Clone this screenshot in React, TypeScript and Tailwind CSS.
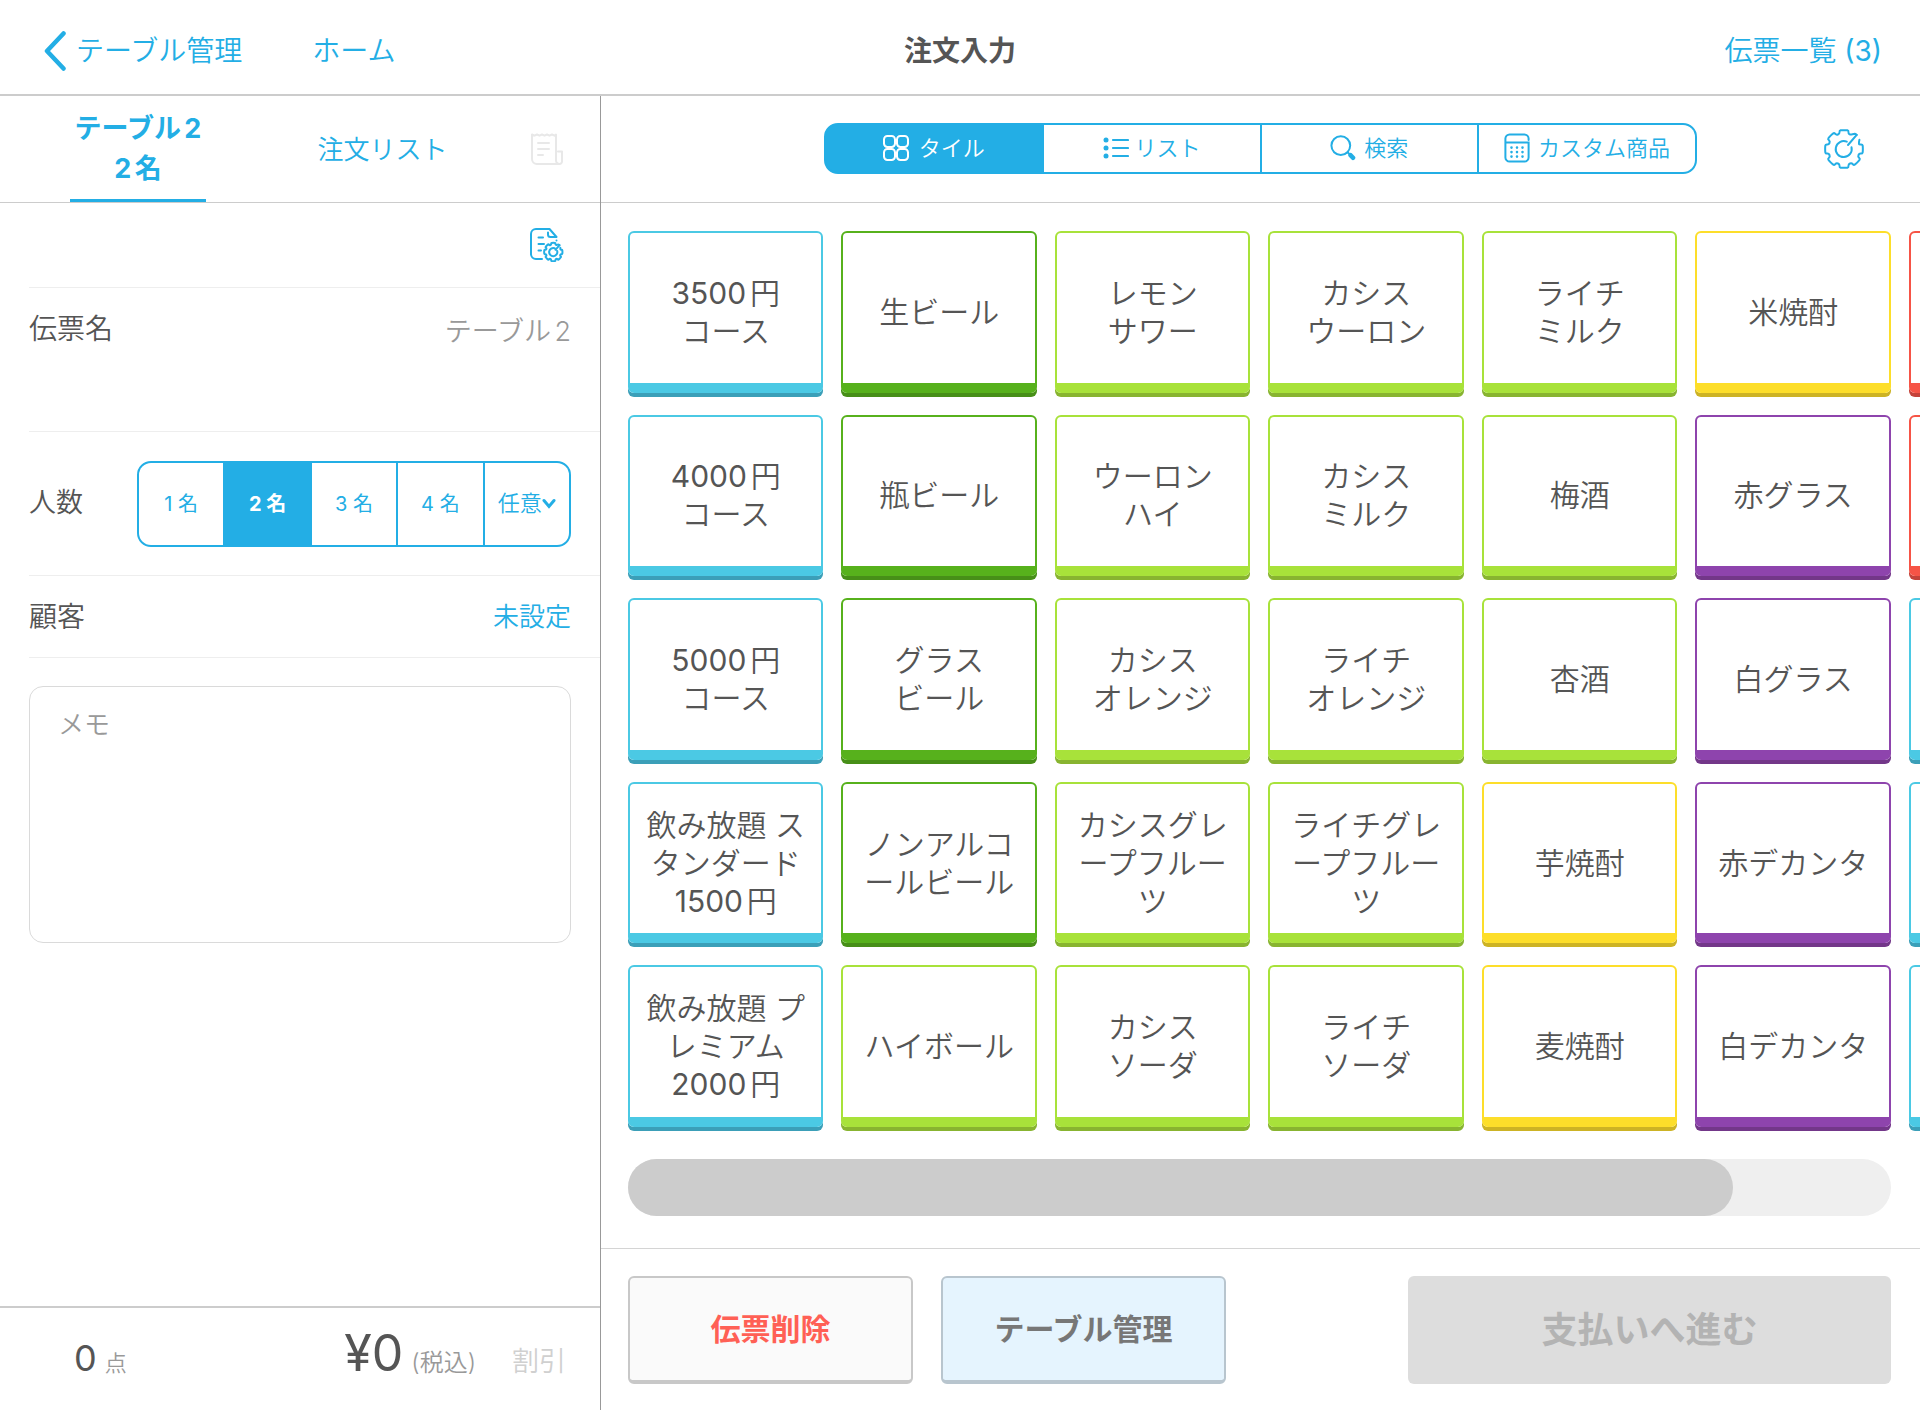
import React, { useState } from "react";

type Tone = "cyan" | "green" | "lime" | "yellow" | "purple" | "red";

const toneClasses: Record<Tone, string> = {
  cyan: "border-[#4bc9e4] shadow-[0_4px_0_#3b9fb8]",
  green: "border-[#57b11c] shadow-[0_4px_0_#478f18]",
  lime: "border-[#a8e23a] shadow-[0_4px_0_#88b430]",
  yellow: "border-[#fdde2a] shadow-[0_4px_0_#cdb324]",
  purple: "border-[#8e44ad] shadow-[0_4px_0_#733789]",
  red: "border-[#f65446] shadow-[0_4px_0_#c4433a]",
};

// one inner list per column, top to bottom
const columns: { name: string; tone: Tone }[][] = [
  [
    { name: "3500円\nコース", tone: "cyan" },
    { name: "4000円\nコース", tone: "cyan" },
    { name: "5000円\nコース", tone: "cyan" },
    { name: "飲み放題 ス\nタンダード\n1500円", tone: "cyan" },
    { name: "飲み放題 プ\nレミアム\n2000円", tone: "cyan" },
  ],
  [
    { name: "生ビール", tone: "green" },
    { name: "瓶ビール", tone: "green" },
    { name: "グラス\nビール", tone: "green" },
    { name: "ノンアルコ\nールビール", tone: "green" },
    { name: "ハイボール", tone: "lime" },
  ],
  [
    { name: "レモン\nサワー", tone: "lime" },
    { name: "ウーロン\nハイ", tone: "lime" },
    { name: "カシス\nオレンジ", tone: "lime" },
    { name: "カシスグレ\nープフルー\nツ", tone: "lime" },
    { name: "カシス\nソーダ", tone: "lime" },
  ],
  [
    { name: "カシス\nウーロン", tone: "lime" },
    { name: "カシス\nミルク", tone: "lime" },
    { name: "ライチ\nオレンジ", tone: "lime" },
    { name: "ライチグレ\nープフルー\nツ", tone: "lime" },
    { name: "ライチ\nソーダ", tone: "lime" },
  ],
  [
    { name: "ライチ\nミルク", tone: "lime" },
    { name: "梅酒", tone: "lime" },
    { name: "杏酒", tone: "lime" },
    { name: "芋焼酎", tone: "yellow" },
    { name: "麦焼酎", tone: "yellow" },
  ],
  [
    { name: "米焼酎", tone: "yellow" },
    { name: "赤グラス", tone: "purple" },
    { name: "白グラス", tone: "purple" },
    { name: "赤デカンタ", tone: "purple" },
    { name: "白デカンタ", tone: "purple" },
  ],
  [
    { name: "", tone: "red" },
    { name: "", tone: "red" },
    { name: "", tone: "cyan" },
    { name: "", tone: "cyan" },
    { name: "", tone: "cyan" },
  ],
];

// Inter has no 350 weight, so digits are set a step heavier than the Japanese text
const withDigits = (text: string) =>
  text.split(/(\d+)/).map((part, i) =>
    i % 2 ? <span key={i} className="font-normal">{part}</span> : part
  );

type Polar = [radius: number, degrees: number];

// Rounded gear outline, clockwise from the right tooth to the top one. The upper right tooth is left open.
const gearOutline = (cx: number, cy: number, outer: number, inner: number) => {
  const polar: Polar[] = [[outer - 1, 59], [inner, 68]];
  for (let tooth = 2; tooth <= 8; tooth++) {
    const a = tooth * 45;
    polar.push([inner, a - 16], [outer, a - 14], [outer, a - 7], [outer, a + 7], [outer, a + 14], [inner, a + 16]);
  }
  polar.push([inner, 384], [inner + 1, 390], [outer, 396], [outer, 402]);

  const points = polar.map(([r, deg]) => {
    const rad = (deg * Math.PI) / 180;
    return [cx + r * Math.sin(rad), cy - r * Math.cos(rad)];
  });
  const curves = points.slice(1, -1).map(([x, y], i) => {
    const [nx, ny] = points[i + 2];
    return `Q${x} ${y} ${(x + nx) / 2} ${(y + ny) / 2}`;
  });
  return `M${points[0].join(" ")}${curves.join("")}L${points[points.length - 1].join(" ")}`;
};

const TileIcon = () => (
  <svg className="w-[26px] h-[26px]" viewBox="0 0 26 26" fill="none" stroke="currentColor" strokeWidth="2">
    <rect x="1" y="1" width="11" height="11" rx="3.4" />
    <rect x="14" y="1" width="11" height="11" rx="3.4" />
    <rect x="1" y="14" width="11" height="11" rx="3.4" />
    <rect x="14" y="14" width="11" height="11" rx="3.4" />
  </svg>
);

const ListIcon = () => (
  <svg className="w-[26px] h-[26px]" viewBox="0 0 26 26" fill="none" stroke="currentColor" strokeWidth="2.2" strokeLinecap="round">
    <path d="M10 5H25M10 13H25M10 21H25" />
    <g fill="currentColor" stroke="none">
      <circle cx="3" cy="5" r="2.5" />
      <circle cx="3" cy="13" r="2.5" />
      <circle cx="3" cy="21" r="2.5" />
    </g>
  </svg>
);

const SearchIcon = () => (
  <svg className="w-[26px] h-[26px]" viewBox="0 0 26 26" fill="none" stroke="currentColor" strokeLinecap="round">
    <circle cx="10.8" cy="10.6" r="9.4" strokeWidth="2" />
    <path d="M17.6 17.2L20 19.6" strokeWidth="2" />
    <path d="M20.6 20.2L23 22.8" strokeWidth="4.6" />
  </svg>
);

const CalculatorIcon = () => (
  <svg className="w-[26px] h-[30px]" viewBox="0 0 26 30" fill="none" stroke="currentColor" strokeWidth="2" strokeLinecap="round">
    <path d="M24.6 7V5.6A4.2 4.2 0 0 0 20.4 1.4H5.6A4.2 4.2 0 0 0 1.4 5.6V24.4A4.2 4.2 0 0 0 5.6 28.6H20.4A4.2 4.2 0 0 0 24.6 24.4V9.6H1.4" />
    <path d="M7.5 14.5V14.6M13 14.5V14.6M18.5 14.5V14.6M7.5 19V19.1M13 19V19.1M18.5 19V19.1M7.5 23.5V23.6M13 23.5V23.6M18.5 23.5V23.6" strokeWidth="2.6" />
  </svg>
);

const GearIcon = () => (
  <svg className="w-10 h-10" viewBox="0 0 40 40" fill="none" stroke="currentColor" strokeWidth="2" strokeLinecap="round" strokeLinejoin="round">
    <path d={gearOutline(20, 20, 19, 15.8)} />
    <path d="M32.7 5.9L24 16M22.8 12.7A8 8 0 1 0 27.5 18.2" />
  </svg>
);

const ReceiptIcon = () => (
  <svg className="w-8 h-8" viewBox="0 0 32 32" fill="none" stroke="currentColor" strokeWidth="2" strokeLinecap="round" strokeLinejoin="round">
    <path d="M1 1.5L3.5 2.7L6 1.5L8.5 2.7L11 1.5L13.5 2.7L16 1.5L18.5 2.7L21 1.5L23.5 2.7L25 1.5V27.5A3.5 3.5 0 0 0 28.5 31A2.5 2.5 0 0 0 31 28.5V18.5H27M28 31H6A5 5 0 0 1 1 26V1.5" />
    <path d="M7 10H18M7 16H18M7 22H12" />
  </svg>
);

const SlipSettingsIcon = () => (
  <svg className="w-[34px] h-[34px]" viewBox="0 0 34 34" fill="none" stroke="currentColor" strokeWidth="2" strokeLinecap="round" strokeLinejoin="round">
    <path d="M12 31H6A5 5 0 0 1 1 26V6A5 5 0 0 1 6 1H19.5L26.5 9H20.5Q18 9 18 6.5V4.5M26.5 12.5V12.6" />
    <path d="M8.5 9.5H13M8.5 16H14M8.5 22.5H11" />
    <path d={gearOutline(23.3, 24, 9.2, 7.6)} />
    <path d="M29.5 17.2L25.5 21.8M24.6 20.2A4.1 4.1 0 1 0 27.2 23" />
  </svg>
);

const modes = [
  { label: "タイル", icon: <TileIcon />, gap: "gap-2.5" },
  { label: "リスト", icon: <ListIcon />, gap: "gap-1.5" },
  { label: "検索", icon: <SearchIcon />, gap: "gap-2" },
  { label: "カスタム商品", icon: <CalculatorIcon />, gap: "gap-2" },
];

const Header = () => (
  <header className="h-24 shrink-0 grid grid-cols-3 items-center pt-2 px-[38px] border-b-2 border-[#ccc] text-[28px]">
    <nav className="flex items-center gap-[70px] pl-1.5 text-[#23aee5]">
      <a href="#tables" className="flex items-center gap-2">
        <svg className="w-6 h-10" viewBox="0 0 24 40" fill="none" stroke="currentColor" strokeWidth="4.5" strokeLinecap="round" strokeLinejoin="round">
          <path d="M19.5 2.5L3 20L19.5 37.5" />
        </svg>
        テーブル管理
      </a>
      <a href="#home">ホーム</a>
    </nav>
    <h1 className="text-center font-bold">注文入力</h1>
    <a href="#slips" className="justify-self-end text-[#23aee5]">
      伝票一覧 <span className="font-normal">(3)</span>
    </a>
  </header>
);

const Sidebar = () => {
  const [guests, setGuests] = useState(2);

  return (
    <aside className="w-[601px] shrink-0 flex flex-col border-r border-[#999]">
      <div className="h-[107px] flex border-b border-[#ccc] pl-[70px] pr-[37px] justify-between text-[26px] text-[#23aee5]">
        <button className="w-[136px] pt-0.5 border-b-3 border-[#23aee5] text-[27px] font-bold leading-10 whitespace-nowrap">
          テーブル2<br />2名
        </button>
        <button className="ml-7">注文リスト</button>
        <button aria-label="レシート" className="text-[#e8e8e8]" disabled>
          <ReceiptIcon />
        </button>
      </div>

      <div className="pl-[29px]">
        <div className="h-[85px] flex items-center justify-end pr-9 border-b border-[#eee] text-[#23aee5]">
          <button aria-label="伝票設定">
            <SlipSettingsIcon />
          </button>
        </div>
        <div className="h-36 flex items-start justify-between pt-5 pr-[29px] border-b border-[#eee]">
          <label htmlFor="slip-name" className="text-[28px]">伝票名</label>
          <input id="slip-name" className="w-72 text-right text-[27px] leading-12 text-[#999] outline-none" defaultValue="テーブル2" />
        </div>
        <div className="h-36 flex items-center justify-between pr-[29px] border-b border-[#eee]">
          <span className="text-[27px]">人数</span>
          <div className="w-[434px] h-[86px] grid grid-cols-5 gap-0.5 border-2 border-[#23aee5] bg-[#23aee5] rounded-[14px] overflow-hidden text-xl text-[#23aee5]">
            {[1, 2, 3, 4].map((n) => (
              <button
                key={n}
                onClick={() => setGuests(n)}
                className={n === guests ? "text-white font-bold" : "bg-white font-normal"}
              >
                {n} 名
              </button>
            ))}
            <div className="flex items-center justify-center bg-white">
              <select aria-label="人数を選択" className="w-11 appearance-none outline-none text-[22px]">
                <option>任意</option>
              </select>
              <svg className="w-[14px] h-3" viewBox="0 0 14 12" fill="none" stroke="currentColor" strokeWidth="3" strokeLinecap="round">
                <path d="M2 2.5L7 8.5L12 2.5" />
              </svg>
            </div>
          </div>
        </div>
        <div className="h-[82px] flex items-center justify-between pr-[29px] border-b border-[#eee]">
          <span className="text-[28px]">顧客</span>
          <button className="text-[26px] text-[#23aee5]">未設定</button>
        </div>
        <div className="pt-7 pr-[29px]">
          <textarea
            aria-label="メモ"
            placeholder="メモ"
            className="block w-full h-[257px] resize-none rounded-[14px] border border-[#dadada] px-7 py-[18px] text-[26px] leading-10 outline-none placeholder:text-[#999]"
          />
        </div>
      </div>

      <footer className="h-[104px] mt-auto flex items-baseline border-t-2 border-[#ccc] pt-2 pl-[74px] pr-[34px]">
        <span className="text-4xl leading-[68px] font-normal">0</span>
        <span className="ml-2 text-[22px] text-[#999]">点</span>
        <span className="ml-auto text-[50px] font-normal">¥0</span>
        <span className="ml-2 text-2xl text-[#999]">(税込)</span>
        <button className="ml-9 text-[27px] text-[#d0d0d0]" disabled>割引</button>
      </footer>
    </aside>
  );
};

const Toolbar = () => {
  const [mode, setMode] = useState("タイル");

  return (
    <div className="h-[107px] shrink-0 grid grid-cols-[1fr_auto_1fr] items-center border-b border-[#ccc] text-[#23aee5]">
      <div className="col-start-2 w-[873px] h-[51px] mb-0.5 grid grid-cols-4 gap-0.5 border-2 border-[#23aee5] bg-[#23aee5] rounded-[14px] overflow-hidden text-[22px]">
        {modes.map((m) => (
          <button
            key={m.label}
            onClick={() => setMode(m.label)}
            className={`flex items-center justify-center ${m.gap} ${m.label === mode ? "text-white" : "bg-white"}`}
          >
            {m.icon}
            {m.label}
          </button>
        ))}
      </div>
      <button aria-label="設定" className="justify-self-end mr-14">
        <GearIcon />
      </button>
    </div>
  );
};

const App = () => {
  return (
    <div
      lang="ja"
      className="min-h-screen flex flex-col bg-white text-[#555] font-[350] font-[Inter,'Noto_Sans_CJK_JP',sans-serif] [text-autospace:normal]"
    >
      <Header />
      <div className="flex-1 flex">
        <Sidebar />
        <main className="flex-1 min-w-0 flex flex-col">
          <Toolbar />

          <div className="flex-1 grid grid-flow-col grid-rows-5 auto-cols-[calc((100%-90px)/6)] gap-4.5 pl-[27px] pr-[29px] pt-7 overflow-hidden">
            {columns.flat().map((item, i) => (
              <button
                key={i}
                className={`mb-1 pt-2 rounded-md border-2 border-b-10 text-[30px] leading-[38px] whitespace-nowrap ${toneClasses[item.tone]}`}
              >
                {item.name.split("\n").map((line) => (
                  <span key={line} className="block">{withDigits(line)}</span>
                ))}
              </button>
            ))}
          </div>

          <div className="pl-[27px] pr-[29px] pt-7 pb-8">
            <div className="h-[57px] rounded-full bg-[#efefef]">
              <div className="h-full w-7/8 rounded-full bg-[#ccc]" />
            </div>
          </div>

          <footer className="flex gap-7 pl-[27px] pr-[29px] pt-[27px] pb-[26px] border-t border-[#d4d4d4] text-3xl font-bold">
            <button className="w-[285px] h-[108px] rounded-md border-2 border-b-4 border-[#c8c8c8] bg-[#fafafa] text-[#ff6055]">
              伝票削除
            </button>
            <button className="w-[285px] h-[108px] rounded-md border-2 border-b-4 border-[#b8c5ce] bg-[#e5f4fe] text-[#777]">
              テーブル管理
            </button>
            <button className="ml-auto w-[483px] h-[108px] rounded-md bg-[#ddd] text-4xl font-bold text-[#b3b3b3]" disabled>
              支払いへ進む
            </button>
          </footer>
        </main>
      </div>
    </div>
  );
};

export default App;
